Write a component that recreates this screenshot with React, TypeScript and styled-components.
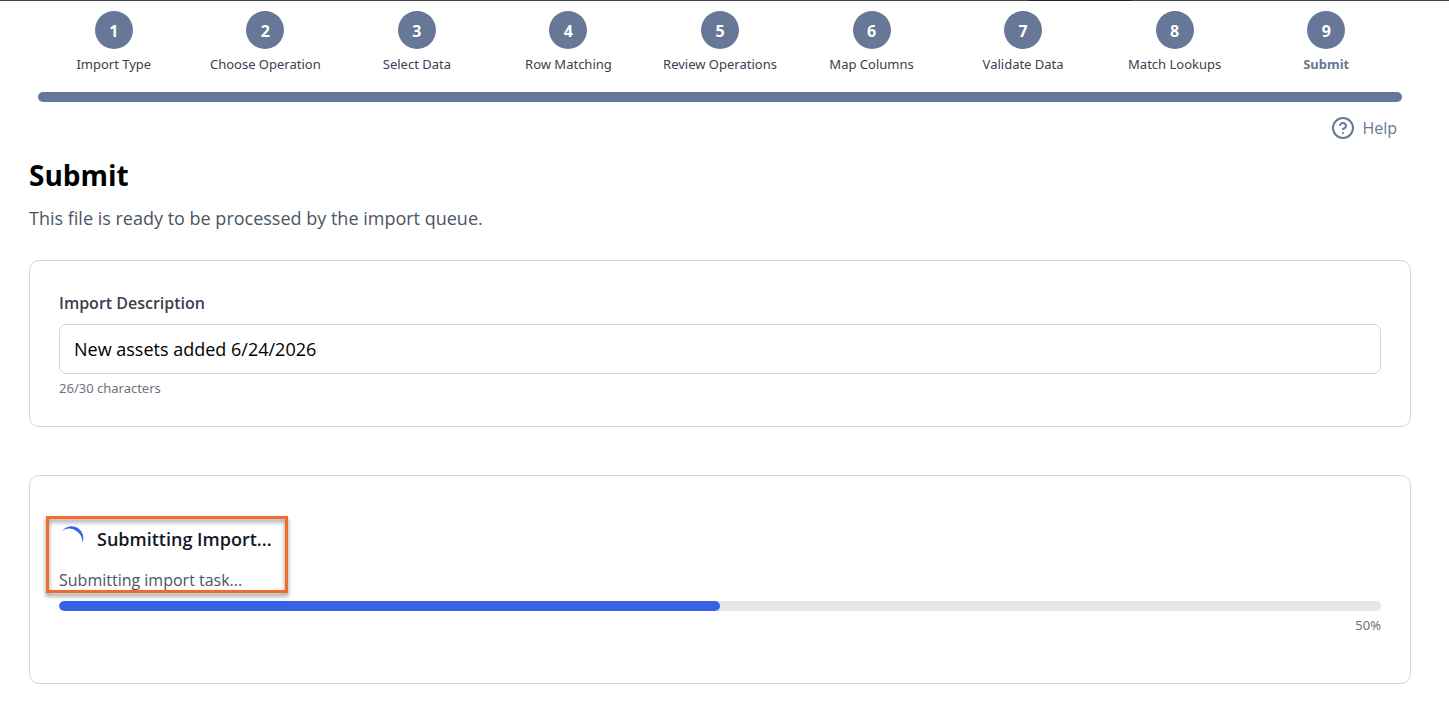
import React, { useId, useState } from "react";
import styled, { createGlobalStyle } from "styled-components";

const slate = "#667797";

const GlobalStyle = createGlobalStyle`
  *, *::before, *::after { box-sizing: border-box; }
  body {
    margin: 0;
    background: #ffffff;
    color: #000000;
    font-family: "Segoe UI", "Open Sans", "Noto Sans", sans-serif;
    font-size: 16px;
    line-height: 24px;
  }
`;

const TopEdge = styled.div`
  height: 1px;
  background: #444444;
  padding-left: 71%;
`;

const TopEdgeTab = styled.div`
  width: 102px;
  height: 1px;
  background: #222222;
`;

const Page = styled.div`
  padding: 10px 38px 32px 29px;
`;

const Stepper = styled.nav`
  padding: 0 9px;
`;

const StepList = styled.ol`
  display: grid;
  grid-template-columns: repeat(9, 1fr);
  margin: 0;
  padding: 0;
  list-style: none;
`;

const Step = styled.li`
  display: flex;
  flex-direction: column;
  align-items: center;
  gap: 5px;
`;

const StepNumber = styled.span`
  display: flex;
  align-items: center;
  justify-content: center;
  width: 38px;
  height: 38px;
  padding-top: 2px;
  border-radius: 50%;
  background: ${slate};
  color: #ffffff;
  font-weight: 700;
`;

const StepLabel = styled.span<{ $current: boolean }>`
  font-family: "Segoe UI", "Noto Sans", sans-serif;
  font-size: 13px;
  line-height: 20px;
  white-space: nowrap;
  color: ${(p) => (p.$current ? slate : "#374151")};
  font-weight: ${(p) => (p.$current ? 700 : 400)};
`;

const StepTrack = styled.div`
  height: 10px;
  margin-top: 18px;
  border-radius: 5px;
  background: ${slate};
`;

const HelpRow = styled.div`
  display: flex;
  justify-content: flex-end;
  padding: 14px 14px 0 0;
`;

const HelpLink = styled.a`
  display: flex;
  align-items: center;
  gap: 7px;
  color: ${slate};
  text-decoration: none;
`;

const Title = styled.h1`
  margin: 17px 0 0;
  font-size: 28px;
  line-height: 36px;
  font-weight: 700;
`;

const Intro = styled.p`
  margin: 11px 0 28px;
  font-size: 18px;
  line-height: 28px;
  color: #4b5563;
`;

const Card = styled.section`
  padding: 30px 29px 28px;
  border: 1px solid #d1d5db;
  border-radius: 10px;
  background: #ffffff;

  & + & {
    margin-top: 48px;
    padding: 49px 29px 48px;
  }
`;

const FieldLabel = styled.label`
  display: block;
  margin-bottom: 9px;
  color: #374151;
  font-weight: 600;
`;

const TextInput = styled.input`
  display: block;
  width: 100%;
  height: 50px;
  padding: 0 14px;
  border: 1px solid #d1d5db;
  border-radius: 7px;
  background: #ffffff;
  color: #000000;
  font-family: inherit;
  font-size: 18px;
`;

const SmallText = styled.p<{ $end?: boolean }>`
  margin: 4px 0 0;
  font-family: "Segoe UI", "Noto Sans", sans-serif;
  font-size: 13px;
  line-height: 20px;
  color: #6b7280;
  text-align: ${(p) => (p.$end ? "right" : "left")};
`;

const Status = styled.div`
  position: relative;
`;

const StatusHeading = styled.h2`
  display: flex;
  align-items: center;
  gap: 14px;
  margin: 0;
  font-size: 18px;
  line-height: 28px;
  font-weight: 600;
  color: #111827;
`;

const StatusText = styled.p`
  margin: 15px 0 9px;
  color: #4b5563;
`;

const Highlight = styled.div`
  position: absolute;
  top: -9px;
  left: -13px;
  width: 242px;
  height: 77px;
  border: 3px solid #f26b2d;
  filter: drop-shadow(0 3px 2px rgba(0, 0, 0, 0.45));
  pointer-events: none;
`;

const Track = styled.div`
  height: 10px;
  border-radius: 5px;
  background: #e5e7eb;
  overflow: hidden;
`;

const Fill = styled.div`
  height: 100%;
  border-radius: 5px;
  background: #3662e3;
`;

const steps = [
  "Import Type",
  "Choose Operation",
  "Select Data",
  "Row Matching",
  "Review Operations",
  "Map Columns",
  "Validate Data",
  "Match Lookups",
  "Submit",
];

const HelpIcon = () => (
  <svg width="24" height="24" viewBox="0 0 24 24" fill="none" stroke="currentColor" strokeWidth="2" strokeLinecap="round" strokeLinejoin="round" aria-hidden="true">
    <circle cx="12" cy="12" r="10" />
    <path d="M9.09 9a3 3 0 0 1 5.83 1c0 2-3 3-3 3" />
    <path d="M12 17h.01" />
  </svg>
);

const Spinner = () => (
  <svg width="24" height="24" viewBox="0 0 24 24" overflow="visible" aria-hidden="true">
    <path d="M2.9 4A12 12 0 0 1 23.2 16.6A13.1 13.1 0 0 0 2.9 4Z" fill="#3662e3" />
  </svg>
);

export default function App() {
  const [description, setDescription] = useState("New assets added 6/24/2026");
  const fieldId = useId();
  const progress = 50;

  return (
    <>
      <GlobalStyle />
      <TopEdge>
        <TopEdgeTab />
      </TopEdge>
      <Page>
        <Stepper aria-label="Import steps">
          <StepList>
            {steps.map((label, i) => {
              const current = i === steps.length - 1;
              return (
                <Step key={label} aria-current={current ? "step" : undefined}>
                  <StepNumber>{i + 1}</StepNumber>
                  <StepLabel $current={current}>{label}</StepLabel>
                </Step>
              );
            })}
          </StepList>
          <StepTrack />
        </Stepper>
        <HelpRow>
          <HelpLink href="#help">
            <HelpIcon />
            Help
          </HelpLink>
        </HelpRow>
        <main>
          <Title>Submit</Title>
          <Intro>This file is ready to be processed by the import queue.</Intro>
          <Card>
            <FieldLabel htmlFor={fieldId}>Import Description</FieldLabel>
            <TextInput
              id={fieldId}
              type="text"
              maxLength={30}
              value={description}
              onChange={(e) => setDescription(e.target.value)}
            />
            <SmallText>{description.length}/30 characters</SmallText>
          </Card>
          <Card>
            <Status>
              <StatusHeading>
                <Spinner />
                Submitting Import...
              </StatusHeading>
              <StatusText>Submitting import task...</StatusText>
              <Highlight />
            </Status>
            <Track role="progressbar" aria-label="Submitting import" aria-valuemin={0} aria-valuemax={100} aria-valuenow={progress}>
              <Fill style={{ width: `${progress}%` }} />
            </Track>
            <SmallText $end>{progress}%</SmallText>
          </Card>
        </main>
      </Page>
    </>
  );
}
